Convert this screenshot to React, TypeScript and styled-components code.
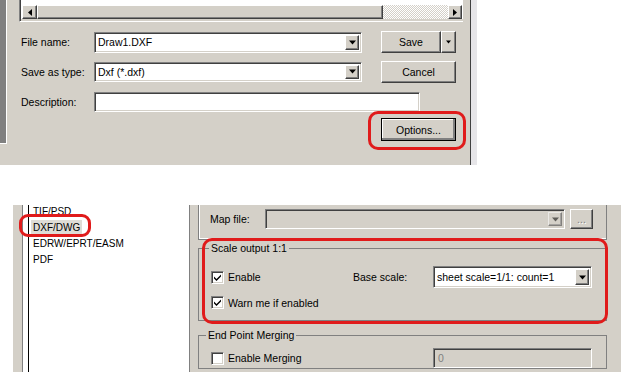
import styled, { createGlobalStyle } from "styled-components";

const FACE = "#d4d0c8";
const SHADOW = "#808080";
const DARK = "#404040";
const RED = "#e01b1b";

const GlobalStyle = createGlobalStyle`
  html, body { margin: 0; padding: 0; background: #fff; }
  body {
    font-family: "Liberation Sans", Arial, sans-serif;
    font-size: 10.5px;
    color: #000;
  }
  * { box-sizing: border-box; }
`;

const raised = `
  border: 1px solid;
  border-color: #fff ${DARK} ${DARK} #fff;
  box-shadow: inset -1px -1px ${SHADOW};
  background: ${FACE};
`;

const sunken = `
  border: 1px solid;
  border-color: ${SHADOW} #fff #fff ${SHADOW};
  box-shadow: inset 1px 1px ${DARK}, inset -1px -1px ${FACE};
`;

const Page = styled.div`
  width: 621px;
  height: 372px;
  overflow: hidden;
  display: flex;
  flex-direction: column;
  background: #fff;
`;

/* ---------- save dialog ---------- */

const SaveDialog = styled.div`
  width: 477px;
  height: 165px;
  flex-shrink: 0;
  display: flex;
  background: ${FACE};
`;

const SideStrip = styled.div`
  width: 7px;
  height: 144px;
  background: ${SHADOW};
  border-right: 1px solid #fff;
  border-bottom: 1px solid #fff;
`;

const DialogBody = styled.div`
  flex: 1;
  padding-left: 12px;
  display: flex;
  flex-direction: column;
`;

const DialogEdge = styled.div`
  width: 7px;
  border-left: 1px solid ${DARK};
  background: #e6e5e8;
`;

const FileList = styled.div`
  width: 444px;
  height: 22px;
  background: #fff;
  border-left: 1px solid ${SHADOW};
  border-bottom: 1px solid #fff;
  box-shadow: inset 1px 0 ${DARK}, inset 0 -2px ${FACE};
  padding: 5px 1px 0 2px;
`;

const ScrollBar = styled.div`
  display: flex;
  height: 14px;
`;

const ScrollArrow = styled.div<{ $w: number }>`
  ${raised}
  width: ${(p) => p.$w}px;
  display: flex;
  align-items: center;
  justify-content: center;
`;

const ScrollThumb = styled.div`
  ${raised}
  width: 346px;
`;

const ScrollTrack = styled.div`
  flex: 1;
  background: repeating-conic-gradient(${FACE} 0 25%, #fff 0 50%) 0 0 / 2px 2px;
`;

const FormRow = styled.div<{ $top: number; $h: number; $end?: boolean }>`
  display: flex;
  align-items: center;
  justify-content: ${(p) => (p.$end ? "flex-end" : "flex-start")};
  margin-top: ${(p) => p.$top}px;
  height: ${(p) => p.$h}px;
  padding: 0 14px 0 2px;
`;

const FieldLabel = styled.span<{ $w: number }>`
  width: ${(p) => p.$w}px;
  flex-shrink: 0;
  white-space: nowrap;
`;

const Combo = styled.div<{ $w: number; $h: number; $disabled?: boolean }>`
  ${sunken}
  width: ${(p) => p.$w}px;
  height: ${(p) => p.$h}px;
  flex-shrink: 0;
  display: flex;
  align-items: center;
  padding: 2px 2px 2px 3px;
  background: ${(p) => (p.$disabled ? FACE : "#fff")};
  color: ${(p) => (p.$disabled ? SHADOW : "#000")};
`;

const ComboText = styled.span`
  flex: 1;
  white-space: nowrap;
  overflow: hidden;
`;

const DropButton = styled.div<{ $disabled?: boolean }>`
  ${raised}
  width: 14px;
  height: 100%;
  display: flex;
  align-items: center;
  justify-content: center;
  opacity: ${(p) => (p.$disabled ? 0.55 : 1)};
`;

const PushButton = styled.div<{ $w: number; $h: number; $ml?: number; $default?: boolean }>`
  ${raised}
  width: ${(p) => p.$w}px;
  height: ${(p) => p.$h}px;
  margin-left: ${(p) => p.$ml ?? 0}px;
  flex-shrink: 0;
  display: flex;
  align-items: center;
  justify-content: center;
  ${(p) =>
    p.$default
      ? `outline: 1px solid #000; outline-offset: -1px; box-shadow: inset -2px -2px ${SHADOW}, inset 1px 1px #fff;`
      : ""}
`;

const SplitButton = styled.div`
  display: flex;
  width: 75px;
  height: 22px;
  margin-left: 19px;
`;

const SplitMain = styled.div`
  ${raised}
  flex: 1;
  display: flex;
  align-items: center;
  justify-content: center;
`;

const SplitArrow = styled.div`
  ${raised}
  width: 15px;
  display: flex;
  align-items: center;
  justify-content: center;
`;

const TextField = styled.div<{ $w: number; $h: number; $disabled?: boolean }>`
  ${sunken}
  width: ${(p) => p.$w}px;
  height: ${(p) => p.$h}px;
  flex-shrink: 0;
  padding: 2px 4px;
  display: flex;
  align-items: center;
  background: ${(p) => (p.$disabled ? FACE : "#fff")};
  color: ${SHADOW};
`;

const Marked = styled.div`
  position: relative;
  flex-shrink: 0;
`;

const Callout = styled.div<{ $t: number; $r: number; $b: number; $l: number; $radius?: number }>`
  position: absolute;
  top: ${(p) => p.$t}px;
  right: ${(p) => p.$r}px;
  bottom: ${(p) => p.$b}px;
  left: ${(p) => p.$l}px;
  border: 3px solid ${RED};
  border-radius: ${(p) => p.$radius ?? 10}px;
  pointer-events: none;
`;

/* ---------- options panel ---------- */

const OptionsPanel = styled.div`
  margin: 40px 0 0 13px;
  flex: 1;
  display: flex;
  background: ${FACE};
  overflow: hidden;
`;

const FormatList = styled.div`
  margin-left: 9px;
  width: 168px;
  background: #fff;
  border-left: 1px solid ${SHADOW};
  border-right: 1px solid ${SHADOW};
  padding-left: 5px;
  display: flex;
`;

const FormatItems = styled.div`
  flex: 1;
  border-left: 1px solid #000;
  padding: 0 0 0 4px;
  margin-top: -1px;
  font-size: 10px;
`;

const FormatItem = styled.div`
  height: 16px;
  line-height: 16px;
  white-space: nowrap;
`;

const Selected = styled.span`
  position: relative;
  display: inline-block;
  margin-left: -2px;
  padding: 0 2px;
  line-height: 15px;
  background: #dedcd6;
`;

const SettingsColumn = styled.div`
  flex: 1;
  padding: 0 14px 0 8px;
  display: flex;
  flex-direction: column;
`;

const MapGroup = styled.div`
  height: 35px;
  border: 1px solid ${SHADOW};
  border-top: none;
  box-shadow: inset 1px -1px #fff;
  display: flex;
  align-items: flex-start;
  padding: 4px 0 0 11px;
`;

const MapRow = styled.div`
  display: flex;
  align-items: center;
  height: 20px;
`;

const EllipsisButton = styled.div`
  ${raised}
  width: 23px;
  height: 20px;
  margin-left: 5px;
  display: flex;
  align-items: center;
  justify-content: center;
  color: ${SHADOW};
  text-shadow: 1px 1px #fff;
`;

const GroupBox = styled.fieldset<{ $mt: number; $pb: number; $legendMl: number }>`
  margin: ${(p) => p.$mt}px 0 0;
  padding: 0 0 ${(p) => p.$pb}px 12px;
  border: 1px solid ${SHADOW};
  min-width: 0;
  legend {
    padding: 0 2px;
    margin-left: ${(p) => p.$legendMl - 12}px;
    line-height: 13px;
  }
`;

const ScaleRow = styled.div<{ $mt: number; $h: number }>`
  display: grid;
  grid-template-columns: 142px 80px 159px;
  align-items: center;
  margin-top: ${(p) => p.$mt}px;
  height: ${(p) => p.$h}px;
`;

const CheckRow = styled.label`
  display: inline-flex;
  align-items: center;
  gap: 4px;
  white-space: nowrap;
`;

const CheckBox = styled.span`
  ${sunken}
  width: 13px;
  height: 13px;
  background: #fff;
  display: inline-flex;
  align-items: center;
  justify-content: center;
  flex-shrink: 0;
`;

function DownArrow({ size = 7 }: { size?: number }) {
  return (
    <svg width={size} height={Math.ceil(size / 2) + 1} viewBox="0 0 7 4">
      <path d="M0 0h7L3.5 4z" fill="#000" />
    </svg>
  );
}

function SideArrow({ dir }: { dir: "left" | "right" }) {
  return (
    <svg width="4" height="7" viewBox="0 0 4 7">
      <path d={dir === "left" ? "M4 0v7L0 3.5z" : "M0 0v7l4-3.5z"} fill="#000" />
    </svg>
  );
}

function Check({ checked, label }: { checked: boolean; label: string }) {
  return (
    <CheckRow>
      <CheckBox>
        {checked && (
          <svg width="7" height="7" viewBox="0 0 7 7">
            <path d="M0 2.5l2.5 2.5L7 0.5v2L2.5 7 0 4.5z" fill="#000" />
          </svg>
        )}
      </CheckBox>
      {label}
    </CheckRow>
  );
}

export default function App() {
  return (
    <Page>
      <GlobalStyle />
      <SaveDialog>
        <SideStrip />
        <DialogBody>
          <FileList>
            <ScrollBar>
              <ScrollArrow $w={15}>
                <SideArrow dir="left" />
              </ScrollArrow>
              <ScrollThumb />
              <ScrollTrack />
              <ScrollArrow $w={14}>
                <SideArrow dir="right" />
              </ScrollArrow>
            </ScrollBar>
          </FileList>

          <FormRow $top={9} $h={22}>
            <FieldLabel $w={73}>File name:</FieldLabel>
            <Combo $w={268} $h={21}>
              <ComboText>Draw1.DXF</ComboText>
              <DropButton>
                <DownArrow />
              </DropButton>
            </Combo>
            <SplitButton>
              <SplitMain>Save</SplitMain>
              <SplitArrow>
                <DownArrow size={5} />
              </SplitArrow>
            </SplitButton>
          </FormRow>

          <FormRow $top={7} $h={23}>
            <FieldLabel $w={73}>Save as type:</FieldLabel>
            <Combo $w={268} $h={20}>
              <ComboText>Dxf (*.dxf)</ComboText>
              <DropButton>
                <DownArrow />
              </DropButton>
            </Combo>
            <PushButton $w={75} $h={22} $ml={19}>
              Cancel
            </PushButton>
          </FormRow>

          <FormRow $top={9} $h={20}>
            <FieldLabel $w={73}>Description:</FieldLabel>
            <TextField $w={326} $h={20} />
          </FormRow>

          <FormRow $top={6} $h={23} $end>
            <Marked>
              <PushButton $w={75} $h={23} $default>
                Options...
              </PushButton>
              <Callout $t={-7} $r={-10} $b={-9} $l={-13} />
            </Marked>
          </FormRow>
        </DialogBody>
        <DialogEdge />
      </SaveDialog>

      <OptionsPanel>
        <FormatList>
          <FormatItems>
            <FormatItem>TIF/PSD</FormatItem>
            <FormatItem>
              <Selected>
                DXF/DWG
                <Callout $t={-6} $r={-9} $b={-2} $l={-12} $radius={9} />
              </Selected>
            </FormatItem>
            <FormatItem>EDRW/EPRT/EASM</FormatItem>
            <FormatItem>PDF</FormatItem>
          </FormatItems>
        </FormatList>

        <SettingsColumn>
          <MapGroup>
            <MapRow>
              <FieldLabel $w={55}>Map file:</FieldLabel>
              <Combo $w={300} $h={20} $disabled>
                <ComboText />
                <DropButton $disabled>
                  <DownArrow />
                </DropButton>
              </Combo>
              <EllipsisButton>...</EllipsisButton>
            </MapRow>
          </MapGroup>

          <Marked>
            <GroupBox $mt={2} $pb={11} $legendMl={10}>
              <legend>Scale output 1:1</legend>
              <ScaleRow $mt={11} $h={22}>
                <Check checked label="Enable" />
                <span>Base scale:</span>
                <Combo $w={159} $h={22}>
                  <ComboText>sheet scale=1/1: count=1</ComboText>
                  <DropButton>
                    <DownArrow />
                  </DropButton>
                </Combo>
              </ScaleRow>
              <ScaleRow $mt={8} $h={13}>
                <Check checked label="Warn me if enabled" />
              </ScaleRow>
            </GroupBox>
            <Callout $t={-2} $r={-1} $b={-3} $l={4} />
          </Marked>

          <GroupBox $mt={8} $pb={0} $legendMl={7}>
            <legend>End Point Merging</legend>
            <ScaleRow $mt={6} $h={20}>
              <Check checked={false} label="Enable Merging" />
              <span />
              <TextField $w={159} $h={20} $disabled>
                0
              </TextField>
            </ScaleRow>
          </GroupBox>
        </SettingsColumn>
      </OptionsPanel>
    </Page>
  );
}
